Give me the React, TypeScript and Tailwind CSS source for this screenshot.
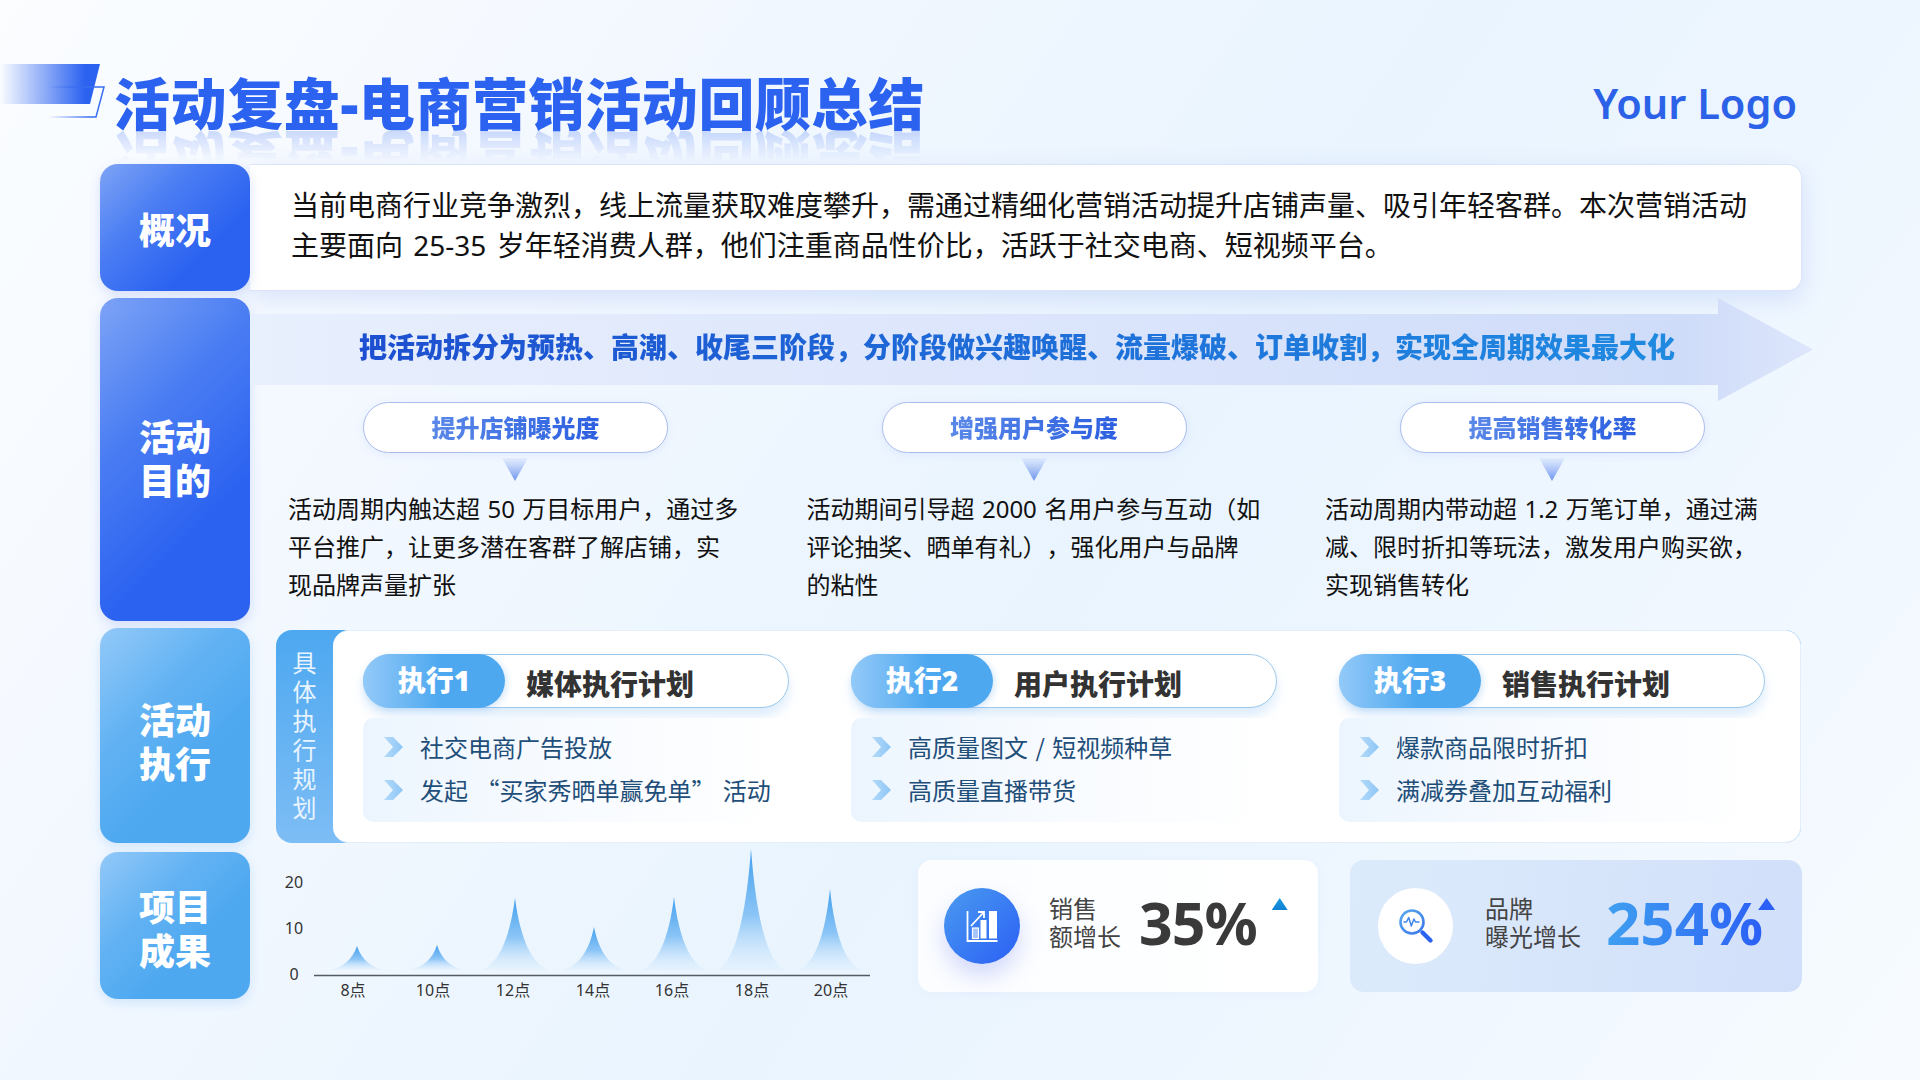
import React from "react";

const blueTile = "bg-[linear-gradient(135deg,#7ea4f6_0%,#4a7df3_35%,#2b62f0_70%)] shadow-[0_4px_12px_rgba(60,100,230,0.18)]";
const skyTile = "bg-[linear-gradient(135deg,#93c9f8_0%,#62b2f3_35%,#4da8f0_65%)] shadow-[0_4px_12px_rgba(80,160,240,0.2)]";
const tile = "w-[150px] shrink-0 rounded-[18px] flex items-center justify-center text-white font-black text-[36px] leading-[44px] text-center";

const goals = [
  { t: "提升店铺曝光度", l: ["活动周期内触达超 50 万目标用户，通过多", "平台推广，让更多潜在客群了解店铺，实", "现品牌声量扩张"] },
  { t: "增强用户参与度", l: ["活动期间引导超 2000 名用户参与互动（如", "评论抽奖、晒单有礼），强化用户与品牌", "的粘性"] },
  { t: "提高销售转化率", l: ["活动周期内带动超 1.2 万笔订单，通过满", "减、限时折扣等玩法，激发用户购买欲，", "实现销售转化"] },
];

const plans = [
  { n: "执行1", t: "媒体执行计划", i: ["社交电商广告投放", "发起 “买家秀晒单赢免单” 活动"] },
  { n: "执行2", t: "用户执行计划", i: ["高质量图文 / 短视频种草", "高质量直播带货"] },
  { n: "执行3", t: "销售执行计划", i: ["爆款商品限时折扣", "满减券叠加互动福利"] },
];

const peaks = [
  { x: 357, top: 945, w: 29 },
  { x: 437, top: 944, w: 29 },
  { x: 515, top: 897, w: 34 },
  { x: 594, top: 926, w: 32 },
  { x: 674, top: 896, w: 33 },
  { x: 751, top: 848, w: 33 },
  { x: 830, top: 888, w: 31 },
];
const xLabels = [
  ["8点", 353],
  ["10点", 433],
  ["12点", 513],
  ["14点", 593],
  ["16点", 672],
  ["18点", 752],
  ["20点", 831],
] as const;

function peakPath(x: number, top: number, w: number) {
  const b = 969;
  const h = b - top;
  return `M${x - w} ${b} C${x - w * 0.5} ${b - h * 0.08} ${x - w * 0.16} ${b - h * 0.42} ${x} ${top} C${x + w * 0.16} ${b - h * 0.42} ${x + w * 0.5} ${b - h * 0.08} ${x + w} ${b} Z`;
}

function Chevron() {
  return (
    <svg width="21" height="20" viewBox="0 0 21 20" className="shrink-0">
      <defs>
        <linearGradient id="chev" x1="0" x2="1" y1="0" y2="0">
          <stop offset="0" stopColor="#b4dafa" />
          <stop offset="1" stopColor="#8cc6f5" />
        </linearGradient>
      </defs>
      <polygon points="1,0 10,0 20,10 10,20 1,20 10,10" fill="url(#chev)" />
    </svg>
  );
}

export default function App() {
  return (
    <div className="relative w-[1920px] h-[1080px] overflow-hidden [text-spacing-trim:space-all] font-['Noto_Sans','Noto_Sans_CJK_SC',sans-serif] bg-[linear-gradient(125deg,#fbfdff_0%,#f3f8ff_25%,#e9f4fe_55%,#f0f7ff_80%,#f7fbff_100%)]">
      {/* decoration */}
      <svg className="absolute left-0 top-[60px]" width="110" height="62" viewBox="0 60 110 62">
        <defs>
          <linearGradient id="deco" x1="0" x2="1" y1="0" y2="0">
            <stop offset="0" stopColor="#2b62f0" stopOpacity="0" />
            <stop offset="0.85" stopColor="#2b62f0" />
          </linearGradient>
          <linearGradient id="decoLine" x1="0" x2="1" y1="0" y2="0">
            <stop offset="0.25" stopColor="#2b62f0" stopOpacity="0" />
            <stop offset="0.8" stopColor="#3a6ef0" />
          </linearGradient>
        </defs>
        <polygon points="0,64 100,64 90,104 0,104" fill="url(#deco)" />
        <polyline points="30,87 104,87 96,117 30,117" fill="none" stroke="url(#decoLine)" strokeWidth="1.5" />
      </svg>

      {/* header */}
      <header className="flex items-center justify-between h-[64px] pt-[71px] box-content pl-[114px] pr-[123px]">
        <h1 className="text-[56px] leading-[64px] font-black tracking-[0.6px] text-[#2b62f0] whitespace-nowrap [-webkit-box-reflect:below_-9px_linear-gradient(to_bottom,transparent_45%,rgba(255,255,255,0.25))]">
          活动复盘-电商营销活动回顾总结
        </h1>
        <div className="text-[41.5px] leading-[48px] font-semibold text-[#2b62e8]">Your Logo</div>
      </header>

      <main className="mt-[29px] pl-[100px] w-[1850px] flex flex-col">
        {/* 概况 */}
        <section className="flex h-[127px]">
          <div className={`${tile} ${blueTile} relative z-10 pt-[7px]`}>概况</div>
          <div className="relative w-[1552px] bg-white rounded-r-[14px] border border-[#dbe4f8] border-l-0 shadow-[0_8px_24px_rgba(90,130,230,0.18)] pl-[41px] pt-[20px] text-[28px] leading-[40px] text-[#111111] whitespace-nowrap [word-spacing:3px]">
            当前电商行业竞争激烈，线上流量获取难度攀升，需通过精细化营销活动提升店铺声量、吸引年轻客群。本次营销活动
            <br />
            主要面向 25-35 岁年轻消费人群，他们注重商品性价比，活跃于社交电商、短视频平台。
          </div>
        </section>

        {/* 活动目的 */}
        <section className="flex h-[323px] mt-[7px]">
          <div className={`${tile} ${blueTile}`}>
            活动
            <br />
            目的
          </div>
          <div className="flex flex-col">
            <div className="w-[1563px] h-[103px] flex items-center pl-[109px] pb-[5px] [clip-path:polygon(0_16px,1468px_16px,1468px_0,100%_50%,1468px_100%,1468px_87px,0_87px)] bg-[linear-gradient(90deg,#e8effd_0%,#d9e3fb_60%,#cfdcf9_92%,#dde6fb_100%)]">
              <span className="text-[28px] leading-[40px] font-black whitespace-nowrap text-transparent bg-clip-text bg-[linear-gradient(90deg,#1d4fd0_0%,#1f8ae0_100%)]">
                把活动拆分为预热、高潮、收尾三阶段，分阶段做兴趣唤醒、流量爆破、订单收割，实现全周期效果最大化
              </span>
            </div>
            <div className="grid grid-cols-[518.5px_518.5px_518.5px] ml-[38px] mt-[1px]">
              {goals.map((g) => (
                <div key={g.t} className="flex flex-col">
                  <div className="ml-[75px] w-[305px] h-[51px] rounded-full bg-white border border-[#a9bcec] flex items-center justify-center shadow-[0_2px_8px_rgba(120,150,240,0.12)]">
                    <span className="text-[24px] leading-[32px] font-black text-transparent bg-clip-text bg-[linear-gradient(90deg,#5a88e8,#2b5fe0)]">{g.t}</span>
                  </div>
                  <svg className="ml-[214px] mt-[5px]" width="26" height="23" viewBox="0 0 26 23">
                    <defs>
                      <linearGradient id="tri" x1="0" x2="0" y1="0" y2="1">
                        <stop offset="0" stopColor="#7fa2f0" stopOpacity="0.1" />
                        <stop offset="1" stopColor="#6f95ee" />
                      </linearGradient>
                    </defs>
                    <polygon points="0,0 26,0 13,23" fill="url(#tri)" />
                  </svg>
                  <p className="mt-[9px] text-[24px] leading-[38px] text-[#111111] whitespace-nowrap [word-spacing:1.2px]">
                    {g.l.map((line) => (
                      <span key={line} className="block">{line}</span>
                    ))}
                  </p>
                </div>
              ))}
            </div>
          </div>
        </section>

        {/* 活动执行 */}
        <section className="flex h-[215px] mt-[7px]">
          <div className={`${tile} ${skyTile} pt-[14px]`}>
            活动
            <br />
            执行
          </div>
          <div className="ml-[26px] mt-[2px] w-[1525px] h-[213px] flex rounded-[16px] bg-[linear-gradient(180deg,#4da8f0,#7dbdf5)]">
            <div className="w-[57px] shrink-0 flex flex-col items-center pt-[18px] text-[24px] leading-[29px] text-[#e8f4ff]">
              {"具体执行规划".split("").map((c) => (
                <span key={c} className="block">{c}</span>
              ))}
            </div>
            <div className="flex-1 bg-white rounded-[16px] border border-[#e4eefa] border-l-0 pl-[30px] pt-[23px] grid grid-cols-[488px_488px_426px]">
              {plans.map((p) => (
                <div key={p.n}>
                  <div className="w-[426px] h-[54px] rounded-full bg-white border border-[#9cc8ec] flex items-stretch shadow-[0_8px_12px_rgba(100,170,240,0.22)]">
                    <div className="w-[142px] -my-px -ml-px rounded-full flex items-center justify-center bg-[linear-gradient(90deg,#93c9f8_0%,#4da8f0_55%)] text-white font-black text-[28px] leading-[36px] pb-[3px] shadow-[2px_2px_6px_rgba(80,160,240,0.25)]">
                      {p.n}
                    </div>
                    <div className="ml-[21px] flex items-center pt-[5px] font-black text-[28px] leading-[36px] text-[#333333] whitespace-nowrap">{p.t}</div>
                  </div>
                  <div className="mt-[10px] w-[426px] h-[104px] rounded-[10px] bg-[linear-gradient(90deg,#ecf5fe_0%,#f8fbff_50%,#ffffff_100%)] pl-[20px] pt-[7px]">
                    {p.i.map((t) => (
                      <div key={t} className="h-[43px] flex items-center gap-[16px] text-[24px] text-[#1f4e79] whitespace-pre font-['Noto_Sans_CJK_SC',sans-serif] [word-spacing:2px]">
                        <Chevron />
                        {t}
                      </div>
                    ))}
                  </div>
                </div>
              ))}
            </div>
          </div>
        </section>

        {/* 项目成果 */}
        <section className="flex h-[147px] mt-[9px]">
          <div className={`${tile} ${skyTile} pt-[8px]`}>
            项目
            <br />
            成果
          </div>
          <svg className="ml-[20px] -mt-[11px] shrink-0" width="610" height="160" viewBox="270 840 610 160">
            <defs>
              <linearGradient id="peak" x1="0" x2="0" y1="0" y2="1">
                <stop offset="0" stopColor="#42a0ee" />
                <stop offset="0.55" stopColor="#8cc5f6" />
                <stop offset="1" stopColor="#d8ecfd" stopOpacity="0.3" />
              </linearGradient>
            </defs>
            {peaks.map((p) => (
              <path key={p.x} d={peakPath(p.x, p.top, p.w)} fill="url(#peak)" />
            ))}
            <line x1="314" y1="974.5" x2="870" y2="974.5" stroke="#555b63" strokeWidth="1.5" />
            <g fontSize="16" fill="#333" textAnchor="middle" fontFamily="'Noto Sans','Noto Sans CJK SC',sans-serif">
              <text x="294" y="887">20</text>
              <text x="294" y="933">10</text>
              <text x="294" y="979">0</text>
              {xLabels.map(([t, x]) => (
                <text key={t} x={x} y="995">{t}</text>
              ))}
            </g>
          </svg>

          {/* stat 1 */}
          <div className="ml-[38px] mt-[8px] w-[400px] h-[132px] rounded-[14px] bg-[linear-gradient(90deg,#fbfdff,#ffffff)] flex items-center pl-[26px] shrink-0 shadow-[0_2px_12px_rgba(180,210,250,0.12)]">
            <div className="w-[76px] h-[76px] rounded-full flex items-center justify-center bg-[linear-gradient(135deg,#4a9bf0,#2b5ff5)] shadow-[0_12px_22px_rgba(90,110,240,0.25)]">
              <svg width="40" height="40" viewBox="0 0 40 40" fill="none">
                <path d="M5.5 5v30h30" stroke="#fff" strokeWidth="1.8" />
                <rect x="10.5" y="22" width="6" height="10.5" stroke="#fff" strokeWidth="1.2" fill="#fff" fillOpacity="0.55" />
                <rect x="18.5" y="14" width="6" height="18.5" fill="#fff" />
                <rect x="27" y="5" width="8" height="27.5" fill="#fff" />
                <path d="M9 20 L21.5 6.5 M16 6 h6 v6" stroke="#fff" strokeWidth="1.8" />
              </svg>
            </div>
            <div className="ml-[29px] w-[90px] pb-[6px] text-[24px] leading-[28px] text-[#444444] whitespace-nowrap">
              销售
              <br />
              额增长
            </div>
            <div className="text-[59px] leading-[72px] tracking-[-1px] pb-[8px] box-content font-bold text-[#3a3a3a]">35%</div>
            <div className="self-start ml-[15px] mt-[38px] w-[16px] h-[12px] [clip-path:polygon(50%_0,100%_100%,0_100%)] bg-[linear-gradient(180deg,#1a9ae0,#1080d4)]" />
          </div>

          {/* stat 2 */}
          <div className="ml-[32px] mt-[8px] w-[452px] h-[132px] rounded-[14px] bg-[linear-gradient(100deg,#dcebfb,#d2dffa)] flex items-center pl-[28px] shrink-0">
            <div className="w-[75px] h-[76px] rounded-full bg-white flex items-center justify-center">
              <svg width="56" height="56" viewBox="0 0 56 56" fill="none">
                <defs>
                  <linearGradient id="lens" x1="0" x2="1" y1="0" y2="1">
                    <stop offset="0" stopColor="#5aa8ee" />
                    <stop offset="1" stopColor="#3a78ea" />
                  </linearGradient>
                </defs>
                <circle cx="24" cy="24" r="11.5" stroke="url(#lens)" strokeWidth="2.6" />
                <path d="M15.5 24 h3 l2.2 -4.5 2.6 8.5 2.6 -7 1.6 3 h4" stroke="#3f86ea" strokeWidth="1.5" strokeLinejoin="round" />
                <path d="M34.5 34.5 L42.5 42.5" stroke="#2b62f0" strokeWidth="4.4" strokeLinecap="round" />
              </svg>
            </div>
            <div className="ml-[32px] w-[121px] pb-[6px] text-[24px] leading-[28px] text-[#444444] whitespace-nowrap">
              品牌
              <br />
              曝光增长
            </div>
            <div className="text-[60px] leading-[72px] pb-[8px] box-content font-bold text-transparent bg-clip-text bg-[linear-gradient(90deg,#3fa0f0,#2b5ff5)]">254%</div>
            <div className="self-start -ml-[5px] mt-[38px] w-[17px] h-[12px] [clip-path:polygon(50%_0,100%_100%,0_100%)] bg-[#2b5ff5]" />
          </div>
        </section>
      </main>
    </div>
  );
}
